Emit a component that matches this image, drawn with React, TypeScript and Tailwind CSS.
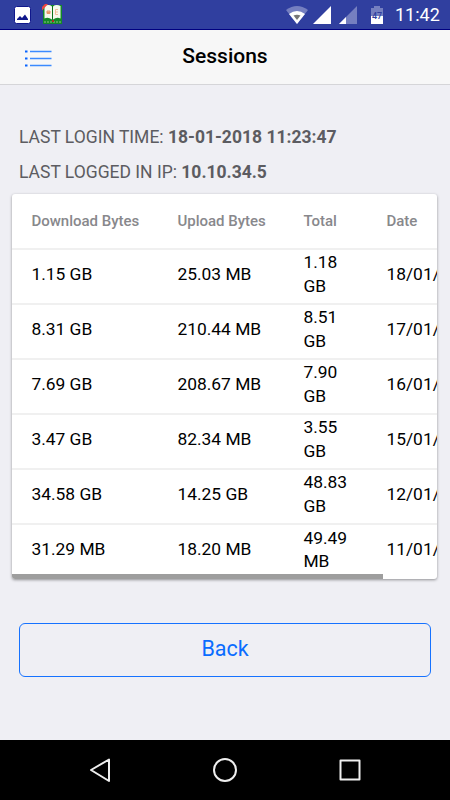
import React from 'react';

interface Session {
  download: string;
  upload: string;
  total: string;
  date: string;
}

const sessions: Session[] = [
  { download: '1.15 GB', upload: '25.03 MB', total: '1.18 GB', date: '18/01/2018' },
  { download: '8.31 GB', upload: '210.44 MB', total: '8.51 GB', date: '17/01/2018' },
  { download: '7.69 GB', upload: '208.67 MB', total: '7.90 GB', date: '16/01/2018' },
  { download: '3.47 GB', upload: '82.34 MB', total: '3.55 GB', date: '15/01/2018' },
  { download: '34.58 GB', upload: '14.25 GB', total: '48.83 GB', date: '12/01/2018' },
  { download: '31.29 MB', upload: '18.20 MB', total: '49.49 MB', date: '11/01/2018' },
];

function StatusBar() {
  return (
    <div className="flex h-[30px] items-center border-b border-[#000080] bg-[#303f9f] pl-[14px] pr-[10px]">
      {/* Notifications */}
      <svg width="18" height="18" viewBox="0 0 18 18">
        <rect x="0.5" y="0.5" width="16" height="17" rx="2" fill="#fff" stroke="#10188c" />
        <path d="M3 14v-1l3-3 2 2 3-3.500L14 13v1z" fill="#10188c" />
      </svg>
      <svg className="ml-[10px]" width="21" height="21" viewBox="0 0 21 21">
        <path d="M1 1h19v19H1z" fill="#148a28" />
        <path d="M2.500 2Q7 0 10 2.500v13Q6 12.500 2.500 14.500zM18.500 2Q14 0 11 2.500v13q4-3 7.500-1z" fill="#f5f8ed" />
        <path d="M10.500 2v13" stroke="#087018" strokeWidth="1" />
        <path d="M0 6.500V3l3-3h3z" fill="#ef4444" />
        <path d="M5 7h3v2.500H5zM5 8.500h3" fill="#f5c3a5" stroke="#e99568" />
        <path d="M16 5.500h-2.500v5H16M13.500 8h2.500" fill="none" stroke="#efbc99" />
        <path d="M2 18h17" stroke="#91bd88" strokeWidth="1" strokeDasharray="2 1" />
        <path d="M10 16h2v2h-2z" fill="#b42b21" />
      </svg>

      {/* Connectivity */}
      <svg className="ml-auto" width="22" height="18" viewBox="0 0 22 18">
        <path d="M0 4Q11-4 22 4L11 18z" fill="#757fc0" />
        <path d="M3 8Q11 2 19 8L11 18z" fill="#fff" />
        <path d="M7.500 9.500Q11 8 14.500 9.500L11 14z" fill="#777" />
      </svg>
      <svg className="ml-[5px]" width="18" height="18" viewBox="0 0 18 18">
        <path d="M18 0v18H0z" fill="#fff" />
      </svg>
      <svg className="ml-[8px]" width="18" height="18" viewBox="0 0 18 18">
        <path d="M18 0v18H0z" fill="#757fc0" />
        <path d="M7 11v7H0z" fill="#fff" />
      </svg>
      <svg className="ml-[14px]" width="12" height="18" viewBox="0 0 12 18">
        <path d="M0 2h3V0h6v2h3v16H0z" fill="#757fc0" />
        <path d="M0 10h12v8H0z" fill="#fff" />
        <text x="6" y="12.500" textAnchor="middle" fontSize="9" fontWeight="500" fill="#303f9f">47</text>
      </svg>
      <span className="ml-[12px] w-[45px] whitespace-nowrap pt-px text-[18px] leading-[30px] text-white">11:42</span>
    </div>
  );
}

function Header() {
  return (
    <div className="grid h-[55px] grid-cols-3 items-center border-b border-[#d5d5d8] bg-[#f7f7f7]">
      <svg className="ml-[25px] mt-[3px]" width="27" height="17" viewBox="0 0 27 17">
        <path d="M0 1.500h2.500M0 8.500h2.500M0 15.500h2.500" stroke="#0864ff" strokeWidth="2" />
        <path d="M5 1.500h21.500M5 8.500h21.500M5 15.500h21.500" stroke="#3b8aff" strokeWidth="1.700" />
      </svg>
      <h1 className="text-center text-[21px] font-medium text-black">Sessions</h1>
    </div>
  );
}

function SessionsTable() {
  return (
    <div className="relative ml-[12.400px] mr-[12.600px] mt-[4px] h-[385px] overflow-hidden rounded-[3px] bg-white shadow-[0_1px_3px_rgba(0,0,0,0.4)]">
      <table className="w-[495px] table-fixed border-collapse text-left">
        <colgroup>
          <col className="w-[146px]" />
          <col className="w-[126px]" />
          <col className="w-[83px]" />
          <col className="w-[140px]" />
        </colgroup>
        <thead>
          <tr className="h-[55px] border-b-2 border-[#f0f0f0] text-[15px] text-[#88888c]">
            <th className="pl-[19px] font-medium">Download Bytes</th>
            <th className="pl-[19px] font-medium">Upload Bytes</th>
            <th className="pl-[19px] font-medium">Total</th>
            <th className="pl-[19px] font-medium">Date</th>
          </tr>
        </thead>
        <tbody className="text-[17.400px] leading-[23.500px] text-black">
          {sessions.map((session) => (
            <tr key={session.date} className="h-[55px] border-b-2 border-[#f0f0f0] last:border-0">
              <td className="pb-[4px] pl-[19px]">{session.download}</td>
              <td className="pb-[4px] pl-[19px]">{session.upload}</td>
              <td className="pb-[4px] pl-[19px] pr-[17px]">{session.total}</td>
              <td className="pb-[4px] pl-[19px]">{session.date}</td>
            </tr>
          ))}
        </tbody>
      </table>
      {/* Horizontal scroll indicator */}
      <div className="absolute bottom-0 left-0 h-[5px] w-[371px] bg-[#9e9e9e]" />
    </div>
  );
}

function NavigationBar() {
  return (
    <div className="flex h-[60px] items-center justify-between bg-black px-[88px]">
      <svg width="24" height="26" viewBox="0 0 24 26" fill="none" stroke="#eee" strokeWidth="2" strokeLinejoin="round">
        <path d="M21 2.500v21.500L3 13z" />
      </svg>
      <svg width="26" height="26" viewBox="0 0 26 26" fill="none" stroke="#eee" strokeWidth="2">
        <circle cx="13" cy="13" r="11" />
      </svg>
      <svg width="24" height="24" viewBox="0 0 24 24" fill="none" stroke="#eee" strokeWidth="2" strokeLinejoin="round">
        <path d="M2.500 2.500h19v19h-19z" />
      </svg>
    </div>
  );
}

export default function App() {
  return (
    <div className="flex h-[800px] w-[450px] flex-col overflow-hidden bg-[#efeff4] font-['Roboto',sans-serif]">
      <StatusBar />
      <Header />
      <main className="flex-1">
        <div className="px-[19px] pt-[35px] text-[17.500px] leading-[35px] text-[#5c5c61]">
          <p>LAST LOGIN TIME: <strong className="font-bold">18-01-2018 11:23:47</strong></p>
          <p>LAST LOGGED IN IP: <strong className="font-bold">10.10.34.5</strong></p>
        </div>
        <SessionsTable />
        <button className="mx-[19px] mt-11 block h-[54px] w-[412px] rounded-[6px] border border-[#1672ff] pb-px text-[21.500px] text-[#0a6cff]">
          Back
        </button>
      </main>
      <NavigationBar />
    </div>
  );
}
